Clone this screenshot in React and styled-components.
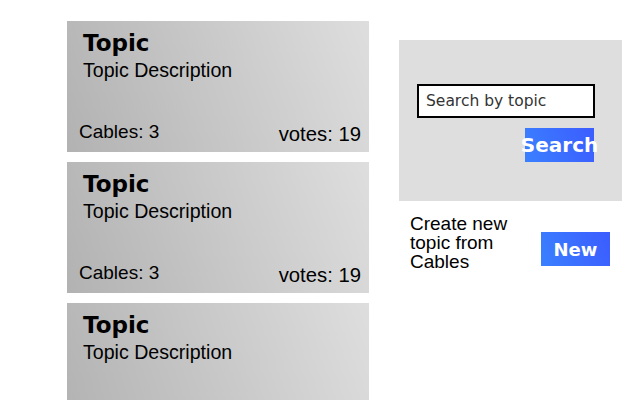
import styled, { createGlobalStyle } from 'styled-components';

const GlobalStyle = createGlobalStyle`
  body {
    margin: 0;
    background: #ffffff;
    font-family: 'Liberation Sans', Arial, sans-serif;
    color: #000000;
  }
`;

const Page = styled.div`
  display: flex;
  align-items: flex-start;
  width: 640px;
  height: 400px;
  overflow: hidden;
  padding: 21px 0 0 67px;
  box-sizing: border-box;
  gap: 30px;
`;

const CardList = styled.div`
  display: flex;
  flex-direction: column;
  gap: 10px;
  width: 302px;
`;

const Card = styled.div`
  height: 131px;
  flex-shrink: 0;
  box-sizing: border-box;
  padding: 8px 16px 0 16px;
  background: linear-gradient(70deg, #b2b2b2, #dedede);
  display: flex;
  flex-direction: column;
`;

const Title = styled.div`
  font-family: 'DejaVu Sans', sans-serif;
  font-weight: bold;
  font-size: 23px;
  line-height: 28px;
`;

const Description = styled.div`
  font-size: 19.6px;
  line-height: 23px;
  margin-top: 2px;
`;

const Footer = styled.div`
  margin-top: auto;
  margin-left: -4px;
  margin-right: -8px;
  display: flex;
  justify-content: space-between;
  align-items: flex-end;
  font-size: 19px;
  padding-bottom: 9px;
`;

const Votes = styled.span`
  font-size: 20.3px;
  position: relative;
  top: 3px;
`;

const Side = styled.div`
  display: flex;
  flex-direction: column;
  margin-top: 19px;
  width: 223px;
`;

const SearchBox = styled.div`
  background: #dedede;
  height: 161px;
  box-sizing: border-box;
  padding: 44px 28px 0 18px;
  display: flex;
  flex-direction: column;
  align-items: flex-end;
  gap: 10px;
`;

const Input = styled.input`
  width: 178px;
  height: 34px;
  box-sizing: border-box;
  border: 2px solid #000000;
  background: #ffffff;
  padding: 0 7px;
  font-family: 'DejaVu Sans', sans-serif;
  font-size: 15.5px;
  outline: none;
  align-self: flex-start;
  &::placeholder {
    color: #333333;
  }
`;

const Button = styled.button`
  width: 69px;
  height: 34px;
  flex-shrink: 0;
  border: none;
  padding: 0;
  background: linear-gradient(70deg, #3a80ff, #3c5cff);
  color: #ffffff;
  font-family: 'DejaVu Sans', sans-serif;
  font-weight: bold;
  font-size: ${({ size }) => size}px;
  display: flex;
  align-items: center;
  justify-content: center;
  white-space: nowrap;
  overflow: visible;
`;

const CreateRow = styled.div`
  display: flex;
  align-items: flex-start;
  justify-content: space-between;
  padding: 13px 12px 0 11px;

  & > ${Button} {
    margin-top: 18px;
  }
`;

const CreateText = styled.div`
  font-size: 19px;
  line-height: 19px;
  width: 110px;
`;

const topics = [
  { title: 'Topic', desc: 'Topic Description', cables: 3, votes: 19 },
  { title: 'Topic', desc: 'Topic Description', cables: 3, votes: 19 },
  { title: 'Topic', desc: 'Topic Description', cables: 3, votes: 19 },
];

export default function App() {
  return (
    <>
      <GlobalStyle />
      <Page>
        <CardList>
          {topics.map((t, i) => (
            <Card key={i}>
              <Title>{t.title}</Title>
              <Description>{t.desc}</Description>
              <Footer>
                <span>Cables: {t.cables}</span>
                <Votes>votes: {t.votes}</Votes>
              </Footer>
            </Card>
          ))}
        </CardList>
        <Side>
          <SearchBox>
            <Input placeholder="Search by topic" />
            <Button size={20}>Search</Button>
          </SearchBox>
          <CreateRow>
            <CreateText>Create new topic from Cables</CreateText>
            <Button size={18}>New</Button>
          </CreateRow>
        </Side>
      </Page>
    </>
  );
}
